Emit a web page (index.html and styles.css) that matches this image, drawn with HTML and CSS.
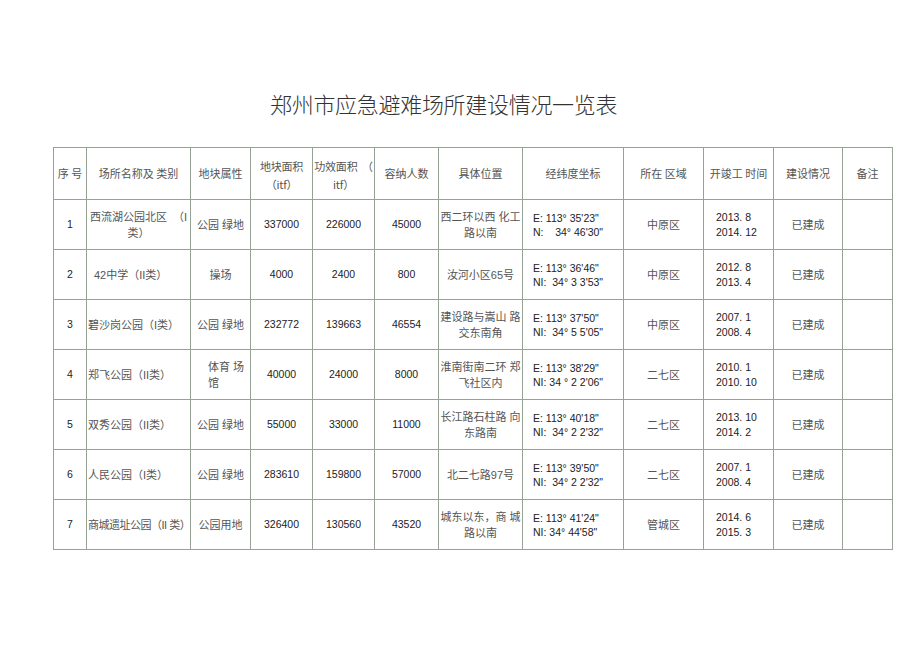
FILE: index.html
```html
<!DOCTYPE html>
<html lang="zh">
<head>
<meta charset="utf-8">
<title>郑州市应急避难场所建设情况一览表</title>
<link rel="stylesheet" href="styles.css">
</head>
<body>
<div class="page">
  <h1 class="title">郑州市应急避难场所建设情况一览表</h1>
  <table class="sheet">
    <colgroup>
      <col class="c1"><col class="c2"><col class="c3"><col class="c4"><col class="c5"><col class="c6">
      <col class="c7"><col class="c8"><col class="c9"><col class="c10"><col class="c11"><col class="c12">
    </colgroup>
    <thead>
      <tr>
        <th>序&nbsp;号</th>
        <th>场所名称及&nbsp;类别</th>
        <th>地块属性</th>
        <th class="two">地块面积<br>（itf）</th>
        <th class="two">功效面积&nbsp;&nbsp;（<br>itf）</th>
        <th>容纳人数</th>
        <th>具体位置</th>
        <th>经纬度坐标</th>
        <th>所在&nbsp;区域</th>
        <th>开竣工&nbsp;时间</th>
        <th>建设情况</th>
        <th>备注</th>
      </tr>
    </thead>
    <tbody>
      <tr>
        <td class="num">1</td>
        <td class="cn wrap">西流湖公园北区&nbsp;&nbsp;（I<br>类）</td>
        <td class="cn">公园&nbsp;绿地</td>
        <td class="num">337000</td>
        <td class="num">226000</td>
        <td class="num">45000</td>
        <td class="cn wrap">西二环以西&nbsp;化工<br>路以南</td>
        <td class="geo">E: 113° 35'23"<br>N:&nbsp;&nbsp;&nbsp;&nbsp;34° 46'30"</td>
        <td class="cn">中原区</td>
        <td class="date">2013. 8<br>2014. 12</td>
        <td class="cn">已建成</td>
        <td></td>
      </tr>
      <tr>
        <td class="num">2</td>
        <td class="cn name pad">42中学（II类）</td>
        <td class="cn">操场</td>
        <td class="num">4000</td>
        <td class="num">2400</td>
        <td class="num">800</td>
        <td class="cn">汝河小区65号</td>
        <td class="geo">E: 113° 36'46"<br>NI:&nbsp;&nbsp;34° 3 3'53"</td>
        <td class="cn">中原区</td>
        <td class="date">2012. 8<br>2013. 4</td>
        <td class="cn">已建成</td>
        <td></td>
      </tr>
      <tr>
        <td class="num">3</td>
        <td class="cn name">碧沙岗公园（I类）</td>
        <td class="cn">公园&nbsp;绿地</td>
        <td class="num">232772</td>
        <td class="num">139663</td>
        <td class="num">46554</td>
        <td class="cn wrap">建设路与嵩山&nbsp;路<br>交东南角</td>
        <td class="geo">E: 113° 37'50"<br>NI:&nbsp;&nbsp;34° 5 5'05"</td>
        <td class="cn">中原区</td>
        <td class="date">2007. 1<br>2008. 4</td>
        <td class="cn">已建成</td>
        <td></td>
      </tr>
      <tr>
        <td class="num">4</td>
        <td class="cn name">郑飞公园（II类）</td>
        <td class="cn wrap left">体育&nbsp;场<br>馆</td>
        <td class="num">40000</td>
        <td class="num">24000</td>
        <td class="num">8000</td>
        <td class="cn wrap">淮南街南二环&nbsp;郑<br>飞社区内</td>
        <td class="geo">E: 113° 38'29"<br>NI: 34 ° 2 2'06"</td>
        <td class="cn">二七区</td>
        <td class="date">2010. 1<br>2010. 10</td>
        <td class="cn">已建成</td>
        <td></td>
      </tr>
      <tr>
        <td class="num">5</td>
        <td class="cn name">双秀公园（II类）</td>
        <td class="cn">公园&nbsp;绿地</td>
        <td class="num">55000</td>
        <td class="num">33000</td>
        <td class="num">11000</td>
        <td class="cn wrap">长江路石柱路&nbsp;向<br>东路南</td>
        <td class="geo">E: 113° 40'18"<br>NI:&nbsp;&nbsp;34° 2 2'32"</td>
        <td class="cn">二七区</td>
        <td class="date">2013. 10<br>2014. 2</td>
        <td class="cn">已建成</td>
        <td></td>
      </tr>
      <tr>
        <td class="num">6</td>
        <td class="cn name">人民公园（I类）</td>
        <td class="cn">公园&nbsp;绿地</td>
        <td class="num">283610</td>
        <td class="num">159800</td>
        <td class="num">57000</td>
        <td class="cn">北二七路97号</td>
        <td class="geo">E: 113° 39'50"<br>NI:&nbsp;&nbsp;34° 2 2'32"</td>
        <td class="cn">二七区</td>
        <td class="date">2007. 1<br>2008. 4</td>
        <td class="cn">已建成</td>
        <td></td>
      </tr>
      <tr>
        <td class="num">7</td>
        <td class="cn name tight">商城遗址公园（II 类）</td>
        <td class="cn">公园用地</td>
        <td class="num">326400</td>
        <td class="num">130560</td>
        <td class="num">43520</td>
        <td class="cn wrap">城东以东，商&nbsp;城<br>路以南</td>
        <td class="geo">E: 113° 41'24"<br>NI: 34° 44'58"</td>
        <td class="cn">管城区</td>
        <td class="date">2014. 6<br>2015. 3</td>
        <td class="cn">已建成</td>
        <td></td>
      </tr>
    </tbody>
  </table>
</div>
</body>
</html>
```

FILE: styles.css
```css
html, body {
  margin: 0;
  padding: 0;
  background: #ffffff;
}

.page {
  padding: 90px 0 0 53px;
  font-family: "Liberation Sans", "Noto Sans CJK SC", sans-serif;
  color: #2b2b2b;
}

.title {
  margin: 0 0 0 217px;
  height: 57px;
  font-family: "Noto Sans CJK SC", sans-serif;
  font-size: 22px;
  font-weight: 300;
  line-height: 26px;
  letter-spacing: -0.3px;
  color: #333333;
}

.sheet {
  border-collapse: collapse;
  table-layout: fixed;
  width: 840px;
}

.c1 { width: 33px; }
.c2 { width: 104px; }
.c3 { width: 60px; }
.c4 { width: 62px; }
.c5 { width: 62px; }
.c6 { width: 64px; }
.c7 { width: 84px; }
.c8 { width: 101px; }
.c9 { width: 80px; }
.c10 { width: 70px; }
.c11 { width: 69px; }
.c12 { width: 50px; }

.sheet th,
.sheet td {
  border: 1px solid #97a297;
  height: 49px;
  padding: 0;
  text-align: center;
  vertical-align: middle;
  font-size: 10px;
  line-height: 15px;
  overflow: hidden;
}

.sheet th {
  font-family: "Noto Sans CJK SC", sans-serif;
  font-weight: normal;
  font-size: 11px;
  color: #555555;
  white-space: nowrap;
}

.sheet th.two {
  line-height: 18px;
  padding-top: 2px;
  letter-spacing: -0.2px;
}

.sheet td.num {
  font-size: 10.5px;
  color: #222;
}

.sheet td.cn {
  font-size: 11px;
  line-height: 16px;
  color: #555555;
}

.sheet td.name {
  text-align: left;
  padding-left: 1px;
  white-space: nowrap;
}

.sheet td.tight {
  letter-spacing: -0.5px;
}

.sheet td.pad {
  padding-left: 7px;
}

.sheet td.wrap {
  white-space: nowrap;
}

.sheet td.left {
  text-align: left;
  padding-left: 17px;
}

.sheet td.geo {
  text-align: left;
  padding-left: 10px;
  font-size: 10.5px;
  line-height: 14px;
  color: #222;
  white-space: nowrap;
}

.sheet td.date {
  text-align: left;
  padding-left: 12px;
  font-size: 10.5px;
  line-height: 15px;
  color: #222;
}
```
